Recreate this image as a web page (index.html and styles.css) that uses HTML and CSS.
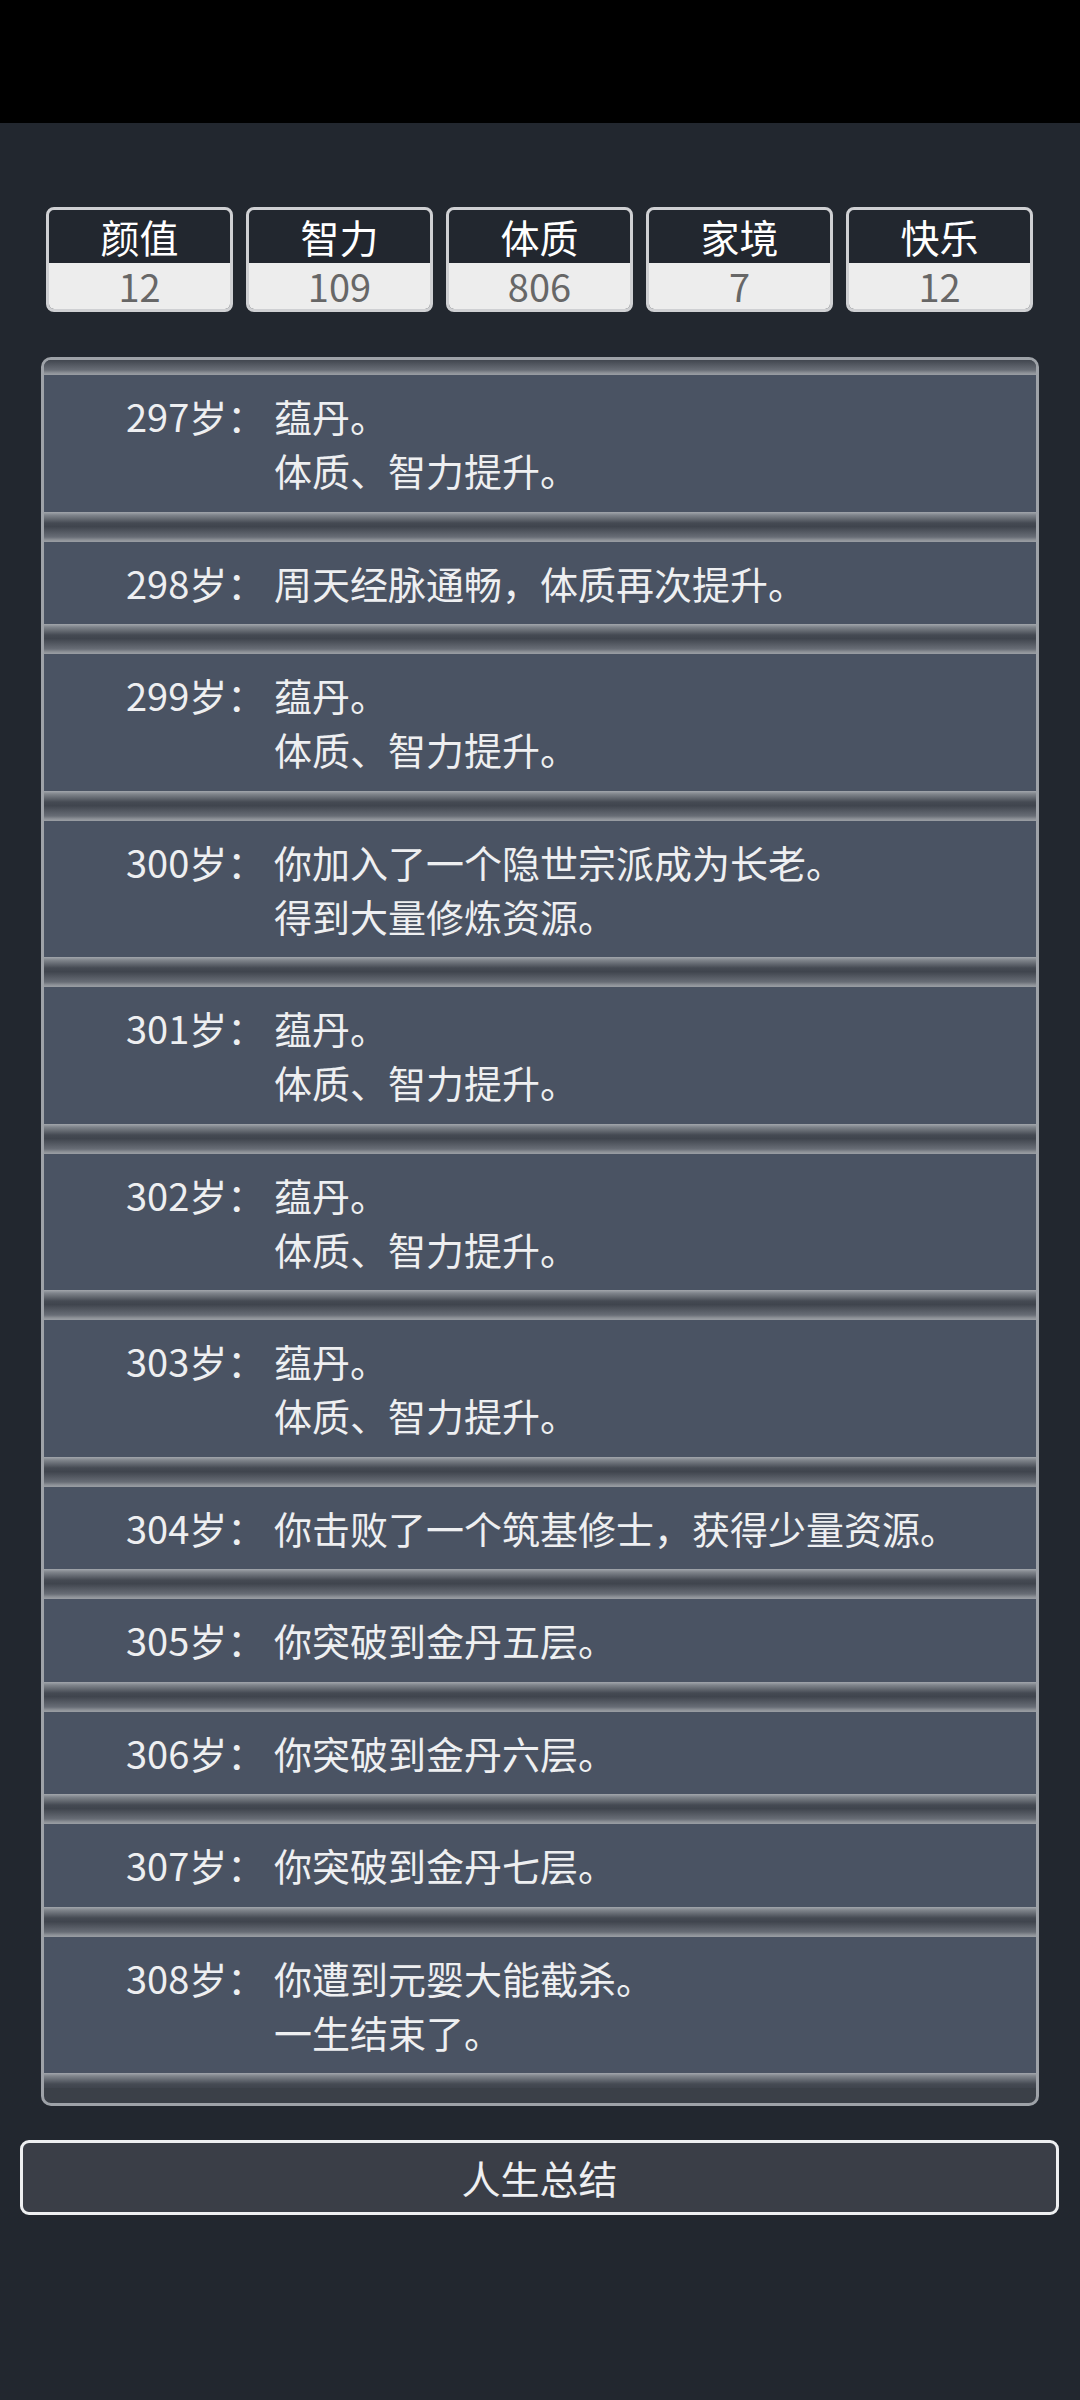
FILE: index.html
```html
<!DOCTYPE html>
<html lang="zh-CN">
<head>
    <meta charset="UTF-8">
    <meta name="viewport" content="width=device-width, initial-scale=1.0">
    <title>人生重开模拟器</title>
    <link rel="stylesheet" href="styles.css">
</head>
<body>
    <div class="statusbar"></div>

    <div class="stats">
        <div class="stat">
            <div class="stat-name">颜值</div>
            <div class="stat-value">12</div>
        </div>
        <div class="stat">
            <div class="stat-name">智力</div>
            <div class="stat-value">109</div>
        </div>
        <div class="stat">
            <div class="stat-name">体质</div>
            <div class="stat-value">806</div>
        </div>
        <div class="stat">
            <div class="stat-name">家境</div>
            <div class="stat-value">7</div>
        </div>
        <div class="stat">
            <div class="stat-name">快乐</div>
            <div class="stat-value">12</div>
        </div>
    </div>

    <div class="log">
        <div class="item">
            <span class="age">297岁：</span>
            <span class="text">蕴丹。<br>体质、智力提升。</span>
        </div>
        <div class="item">
            <span class="age">298岁：</span>
            <span class="text">周天经脉通畅，体质再次提升。</span>
        </div>
        <div class="item">
            <span class="age">299岁：</span>
            <span class="text">蕴丹。<br>体质、智力提升。</span>
        </div>
        <div class="item">
            <span class="age">300岁：</span>
            <span class="text">你加入了一个隐世宗派成为长老。<br>得到大量修炼资源。</span>
        </div>
        <div class="item">
            <span class="age">301岁：</span>
            <span class="text">蕴丹。<br>体质、智力提升。</span>
        </div>
        <div class="item">
            <span class="age">302岁：</span>
            <span class="text">蕴丹。<br>体质、智力提升。</span>
        </div>
        <div class="item">
            <span class="age">303岁：</span>
            <span class="text">蕴丹。<br>体质、智力提升。</span>
        </div>
        <div class="item">
            <span class="age">304岁：</span>
            <span class="text">你击败了一个筑基修士，获得少量资源。</span>
        </div>
        <div class="item">
            <span class="age">305岁：</span>
            <span class="text">你突破到金丹五层。</span>
        </div>
        <div class="item">
            <span class="age">306岁：</span>
            <span class="text">你突破到金丹六层。</span>
        </div>
        <div class="item">
            <span class="age">307岁：</span>
            <span class="text">你突破到金丹七层。</span>
        </div>
        <div class="item">
            <span class="age">308岁：</span>
            <span class="text">你遭到元婴大能截杀。<br>一生结束了。</span>
        </div>
    </div>

    <div class="button">人生总结</div>
</body>
</html>
```

FILE: styles.css
```css
body {
    margin: 0;
    background-color: #22272f;
    color: #eeeff1;
    font-family: "Noto Sans CJK SC", "Noto Sans", sans-serif;
}
.statusbar {
    height: 123px;
    background-color: #000;
}
.stats {
    display: flex;
    gap: 13px;
    padding: 84px 47px 0 46px;
}
.stat {
    flex: 1;
    border: 3px solid #cfd0d3;
    border-radius: 8px;
    overflow: hidden;
}
.stat-name {
    height: 53px;
    line-height: 53px;
    font-size: 39px;
    text-align: center;
    color: #fff;
}
.stat-value {
    height: 46px;
    line-height: 46px;
    font-size: 38px;
    text-align: center;
    background-color: #ededed;
    color: #676767;
}
.log {
    margin: 45px 41px 0;
    border: 3px solid #9ea2a8;
    border-radius: 10px;
    overflow: hidden;
    background-color: #3b4048;
    padding-bottom: 15px;
}
/* верх и низ каждой записи дают "желобок" между ними */
.item {
    display: flex;
    padding: 29.25px 0 29.25px 82px;
    font-size: 38px;
    line-height: 54px;
    background: linear-gradient(to bottom,
        #41464f 0, #686d76 10px, #8e9298 13px, #9a9ea4 15px,
        #4a5363 15px, #4a5363 calc(100% - 15px),
        #a2a6ac calc(100% - 15px), #80858c calc(100% - 12px), #454a53 calc(100% - 4px), #3f444d 100%);
}
.age {
    flex: 0 0 148px;
}
.button {
    margin: 34px 21px 0 20px;
    height: 69px;
    line-height: 69px;
    border: 3px solid #eeeff1;
    border-radius: 9px;
    background-color: #3a3e47;
    font-size: 39px;
    text-align: center;
}
```
